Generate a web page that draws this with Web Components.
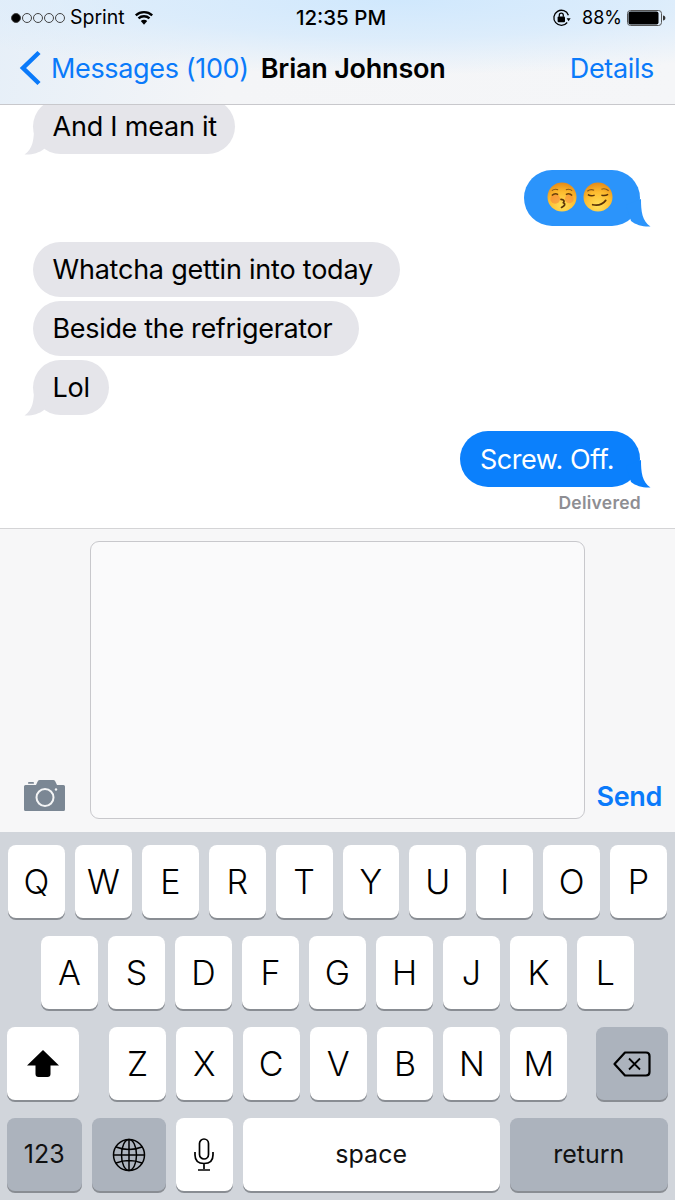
<!DOCTYPE html>
<html lang="en">
<head>
<meta charset="utf-8">
<title>Messages</title>
<style>
  html, body { margin: 0; padding: 0; background: #fff; }
  body { font-family: Inter, Roboto, "Liberation Sans", sans-serif; }
</style>
</head>
<body>
<ios-screen>
  <ios-header slot="top">
    <ios-status-bar></ios-status-bar>
    <ios-nav-bar back="Messages (100)" title-text="Brian Johnson" action="Details"></ios-nav-bar>
  </ios-header>

  <ios-bubble from="them" tail pad="18">And I mean it</ios-bubble>
  <ios-bubble from="me" tail tone="light" emoji gap="16"><ios-emoji kind="kiss"></ios-emoji><ios-emoji kind="smirk"></ios-emoji></ios-bubble>
  <ios-bubble from="them" gap="16">Whatcha gettin into today</ios-bubble>
  <ios-bubble from="them" gap="4" style="--bubble-ls:-.33px">Beside the refrigerator</ios-bubble>
  <ios-bubble from="them" tail gap="4" pad="19">Lol</ios-bubble>
  <ios-bubble from="me" tail gap="16" style="--bubble-ls:-.45px">Screw. Off.</ios-bubble>
  <ios-delivered>Delivered</ios-delivered>

  <ios-composer slot="bottom"></ios-composer>
  <ios-keyboard slot="bottom"></ios-keyboard>
</ios-screen>

<script>
const UI_FONT = 'Inter, Roboto, "Liberation Sans", sans-serif';

class IosScreen extends HTMLElement {
  constructor() {
    super();
    this.attachShadow({mode: 'open'}).innerHTML = `
      <style>
        :host { display: flex; flex-direction: column; width: 675px; height: 1200px; overflow: hidden; background: #fff; }
        .messages { flex: 1 1 0; min-height: 0; overflow: hidden; display: flex; flex-direction: column; justify-content: flex-end; padding: 0 35px 16px 33px; }
      </style>
      <slot name="top"></slot>
      <div class="messages"><slot></slot></div>
      <slot name="bottom"></slot>
    `;
  }
}

class IosHeader extends HTMLElement {
  constructor() {
    super();
    this.attachShadow({mode: 'open'}).innerHTML = `
      <style>
        :host { display: block; background: radial-gradient(ellipse 520px 75px at 400px 0, #d0e8fd 0%, rgba(216,235,252,.85) 50%, rgba(245,246,248,0) 100%), linear-gradient(100deg, #e6eff8 0, #f4f5f7 35%, #f5f6f8 100%); }
      </style>
      <slot></slot>
    `;
  }
}

class IosStatusBar extends HTMLElement {
  constructor() {
    super();
    this.attachShadow({mode: 'open'}).innerHTML = `
      <style>
        :host { display: grid; grid-template-columns: 1fr auto 1fr; align-items: center; height: 35px; padding: 0 9px 0 11px; font: 400 19.500px/35px ${UI_FONT}; color: #000; }
        .left, .right { display: flex; align-items: center; }
        .right { justify-content: flex-end; }
        .dots { display: flex; gap: 1px; margin-right: 5px; }
        .dots i { width: 8px; height: 8px; border-radius: 50%; border: 1px solid #444; box-sizing: content-box; }
        .dots i:first-child { background: #000; }
        .wifi { margin-left: 9px; }
        .time { font-weight: 500; font-size: 20.500px; margin-left: 5px; }
        .pct { margin: 0 5px 0 11px; font-size: 18px; }
      </style>
      <div class="left">
        <div class="dots"><i></i><i></i><i></i><i></i><i></i></div>
        <span>Sprint</span>
        <svg class="wifi" width="20" height="15" viewBox="0 0 20 15"><path d="M10 14.800 6.800 11a4.600 4.600 0 0 1 6.400 0z" fill="#000"/><path d="M4.500 8.300a8.200 8.200 0 0 1 11 0M1.800 5.300a12.200 12.200 0 0 1 16.400 0" fill="none" stroke="#000" stroke-width="2.400"/></svg>
      </div>
      <div class="time">12:35 PM</div>
      <div class="right">
        <svg width="19" height="19" viewBox="0 0 19 19"><path d="M16.400 7.200A7.500 7.500 0 1 0 15.200 14.500" fill="none" stroke="#000" stroke-width="1.300"/><path d="M14.600 10.300h4l-2 2.900z" fill="#000"/><rect x="5.600" y="8.600" width="7.400" height="5.600" rx="1" fill="#000"/><path d="M7.300 8.800V7.200a2 2 0 0 1 4 0v1.600" fill="none" stroke="#000" stroke-width="1.300"/></svg>
        <span class="pct">88%</span>
        <svg width="39" height="16" viewBox="0 0 39 16"><rect x=".5" y=".5" width="34" height="15" rx="3" fill="none" stroke="#555"/><rect x="1.500" y="1.500" width="30" height="13" rx="2" fill="#000"/><path d="M36 5.500c1.400.2 2.400 1.200 2.400 2.500S37.400 10.300 36 10.500z" fill="#333"/></svg>
      </div>
    `;
  }
}

class IosNavBar extends HTMLElement {
  constructor() {
    super();
    this.attachShadow({mode: 'open'});
  }

  connectedCallback() {
    this.shadowRoot.innerHTML = `
      <style>
        :host { display: flex; align-items: center; height: 70px; box-sizing: border-box; border-bottom: 1px solid #c8c8cc; padding: 0 21px 3px 19px; font: 400 27px/1 ${UI_FONT}; color: #0a7afa; letter-spacing: -.35px; }
        .chev { margin-right: 9px; flex: none; }
        .title { margin-left: 12px; font-weight: 600; color: #000; letter-spacing: -.22px; }
        .action { margin-left: auto; }
      </style>
      <svg class="chev" width="23" height="36" viewBox="0 0 23 36"><path d="M20 2.500 4 18l16 15.500" fill="none" stroke="#0a7afa" stroke-width="4.500"/></svg>
      <span>${this.getAttribute('back')}</span>
      <span class="title">${this.getAttribute('title-text')}</span>
      <span class="action">${this.getAttribute('action')}</span>
    `;
  }
}

class IosBubble extends HTMLElement {
  constructor() {
    super();
    this.attachShadow({mode: 'open'});
  }

  connectedCallback() {
    const mine = this.getAttribute('from') === 'me';
    const emoji = this.hasAttribute('emoji');
    const fill = mine ? (this.getAttribute('tone') === 'light' ? '#2b94fb' : '#0b80fc') : '#e5e5ea';
    const tail = this.hasAttribute('tail')
      ? `<svg class="tail" width="26" height="30" viewBox="0 0 26 30"><path d="M11 2C11 14 10 24 1.500 29.500c7 .5 14.500-1.500 19.500-5.500L26 8z" fill="${fill}"/></svg>`
      : '';
    const padRight = this.getAttribute('pad') || (mine ? 26 : 27);
    this.shadowRoot.innerHTML = `
      <style>
        :host { display: flex; flex: none; justify-content: ${mine ? 'flex-end' : 'flex-start'}; margin-top: ${this.getAttribute('gap') || 0}px; }
        .bubble { position: relative; box-sizing: border-box; height: ${mine ? 56 : 55}px; display: flex; align-items: center; padding: 0 ${padRight}px 0 ${mine ? 20 : 19.5}px; border-radius: 28px; background: ${fill}; color: ${mine ? '#fff' : '#000'}; font: 400 27px/1 ${UI_FONT}; letter-spacing: var(--bubble-ls, -.22px); white-space: nowrap; }
        .tail { position: absolute; bottom: -1px; ${mine ? 'right: -12px; transform: scaleX(-1);' : 'left: -10px;'} }
        .text { position: relative; ${emoji ? 'display: flex; gap: 6px; margin-top: -2px;' : ''} }
        ${emoji ? '.bubble { padding: 0 27px 0 23px; }' : ''}
      </style>
      <div class="bubble">${tail}<span class="text"><slot></slot></span></div>
    `;
  }
}

class IosEmoji extends HTMLElement {
  constructor() {
    super();
    this.attachShadow({mode: 'open'});
  }

  connectedCallback() {
    const id = this.getAttribute('kind');
    const kiss = `
      <circle cx="8.500" cy="17.500" r="5" fill="#f4703c" opacity=".45"/><circle cx="23" cy="17.500" r="4.500" fill="#f4703c" opacity=".4"/>
      <path d="M5 9q3-2.500 6.500-1M19.500 8q3.500-1.500 6.500 1" fill="none" stroke="#8a5a18" stroke-width="1.100"/>
      <path d="M5 14q3-3 6.500-1M19.500 13q3.500-2 6.500 1" fill="none" stroke="#6b3f0c" stroke-width="1.500"/>
      <path d="M14.500 18q4.500.5 2.500 3.500q3.500 2-2 4.800" fill="none" stroke="#5b3408" stroke-width="1.800" stroke-linecap="round"/>`;
    const smirk = `
      <path d="M4.500 9.500q3-2.500 7-1M19 7.500q4-1.500 7.500 1.500" fill="none" stroke="#8a5a18" stroke-width="1.200"/>
      <path d="M5 13q3.500 2 7 .5M19 13.500q3.500 1.300 7-.8" fill="none" stroke="#5b3408" stroke-width="1.500"/>
      <path d="M10 23.500q8.500 2 13.500-4.500" fill="none" stroke="#5b3408" stroke-width="1.800" stroke-linecap="round"/>`;
    this.shadowRoot.innerHTML = `
      <style>:host { display: block; width: 30px; height: 30px; }</style>
      <svg width="30" height="30" viewBox="0 0 31 31">
        <defs><radialGradient id="g-${id}" cx=".5" cy=".8" r=".8"><stop offset="0" stop-color="#ffe05a"/><stop offset=".6" stop-color="#fdbb2e"/><stop offset="1" stop-color="#e58a18"/></radialGradient></defs>
        <circle cx="15.500" cy="15.500" r="15" fill="url(#g-${id})"/>
        ${id === 'kiss' ? kiss : smirk}
      </svg>
    `;
  }
}

class IosDelivered extends HTMLElement {
  constructor() {
    super();
    this.attachShadow({mode: 'open'}).innerHTML = `
      <style>
        :host { display: block; flex: none; text-align: right; margin: 6px -1px 0 0; font: 600 17.500px/19px ${UI_FONT}; color: #8e8e93; letter-spacing: .25px; }
      </style>
      <slot></slot>
    `;
  }
}

class IosComposer extends HTMLElement {
  constructor() {
    super();
    this.attachShadow({mode: 'open'}).innerHTML = `
      <style>
        :host { display: flex; align-items: flex-end; height: 304px; box-sizing: border-box; border-top: 1px solid #d4d4d6; background: #f7f7f8; padding: 13px 13px 13px 24px; }
        .camera { flex: none; margin-bottom: 8px; }
        .field { flex: none; width: 495px; height: 278px; box-sizing: border-box; margin-left: 25px; border: 1px solid #c8c8cc; border-radius: 9px; background: #fafafb; }
        .send { margin-left: auto; font: 600 27px/1 ${UI_FONT}; color: #0a7afa; letter-spacing: -.35px; margin-bottom: 9px; }
      </style>
      <svg class="camera" width="41" height="31" viewBox="0 0 41 31">
        <rect x="4" y="2" width="6" height="1.800" rx=".9" fill="#7b8794"/>
        <path d="M1.500 5H12l1.800-3.800Q14.400 0 15.800 0h13.400q1.400 0 2 1.200L33 5h6.500Q41 5 41 6.500v23q0 1.500-1.500 1.500h-38Q0 31 0 29.500v-23Q0 5 1.500 5z" fill="#7b8794"/>
        <circle cx="21" cy="17.500" r="8.500" fill="none" stroke="#f4f5f6" stroke-width="2"/>
        <circle cx="32" cy="9.500" r="1.200" fill="#f4f5f6"/>
      </svg>
      <div class="field"></div>
      <span class="send">Send</span>
    `;
  }
}

class IosKey extends HTMLElement {
  constructor() {
    super();
    this.attachShadow({mode: 'open'}).innerHTML = `
      <style>
        :host { display: flex; flex: none; align-items: center; justify-content: center; width: 56.900px; height: 73px; box-sizing: border-box; border-radius: 8px; background: #fff; box-shadow: 0 2px 0 #898d93; color: #000; font: 300 34px/1 ${UI_FONT}; }
        :host([dark]) { background: #acb3bd; }
        :host([small]) { font-size: 25px; font-weight: 400; color: #111; }
      </style>
      <slot></slot>
    `;
  }
}

class IosKeyboard extends HTMLElement {
  constructor() {
    super();
    const row = (letters) => letters.split('').map((l) => `<ios-key>${l}</ios-key>`).join('');
    this.attachShadow({mode: 'open'}).innerHTML = `
      <style>
        :host { display: flex; flex-direction: column; gap: 18px; height: 368px; box-sizing: border-box; padding: 13px 7px 0 7px; background: #d1d5db; }
        .row { display: flex; gap: 10px; justify-content: center; }
        .row2 { gap: 10.100px; }
        .row3, .row4 { justify-content: flex-start; }
        .row3 ios-key:first-child { margin-right: 20px; }
        .row3 ios-key:last-child { margin-left: 19px; }
      </style>
      <div class="row">${row('QWERTYUIOP')}</div>
      <div class="row row2">${row('ASDFGHJKL')}</div>
      <div class="row row3">
        <ios-key style="width:72px">
          <svg width="32" height="27" viewBox="0 0 32 27"><path d="M16 0 32 15.500H23.500V24q0 3-3 3h-9q-3 0-3-3V15.500H0z" fill="#000"/></svg>
        </ios-key>
        ${row('ZXCVBNM')}
        <ios-key dark style="width:72px">
          <svg width="38" height="26" viewBox="0 0 38 26"><path d="M12 1.500H33q3.500 0 3.500 3.500v16q0 3.500-3.500 3.500H12L1.500 13z" fill="none" stroke="#000" stroke-width="2.200" stroke-linejoin="round"/><path d="M16 7.500l11 11M27 7.500l-11 11" stroke="#000" stroke-width="1.800"/></svg>
        </ios-key>
      </div>
      <div class="row row4">
        <ios-key dark small style="width:74.500px">123</ios-key>
        <ios-key dark style="width:74px">
          <svg width="34" height="34" viewBox="0 0 34 34" fill="none" stroke="#000" stroke-width="1.500"><circle cx="17" cy="17" r="15.500"/><ellipse cx="17" cy="17" rx="7.500" ry="15.500"/><path d="M17 1.500v31M1.500 17h31M4 9q13 5 26 0M4 25q13-5 26 0"/></svg>
        </ios-key>
        <ios-key style="width:57.200px">
          <svg width="20" height="33" viewBox="0 0 20 33" fill="none" stroke="#000" stroke-width="1.700"><rect x="5.500" y="1" width="9" height="20" rx="4.500"/><path d="M1 14v3q0 8.500 9 8.500t9-8.500v-3M10 25.500V31M4 32h12"/></svg>
        </ios-key>
        <ios-key small style="width:257px">space</ios-key>
        <ios-key dark small style="width:158.300px">return</ios-key>
      </div>
    `;
  }
}

customElements.define('ios-screen', IosScreen);
customElements.define('ios-header', IosHeader);
customElements.define('ios-status-bar', IosStatusBar);
customElements.define('ios-nav-bar', IosNavBar);
customElements.define('ios-bubble', IosBubble);
customElements.define('ios-emoji', IosEmoji);
customElements.define('ios-delivered', IosDelivered);
customElements.define('ios-composer', IosComposer);
customElements.define('ios-key', IosKey);
customElements.define('ios-keyboard', IosKeyboard);
</script>
</body>
</html>
